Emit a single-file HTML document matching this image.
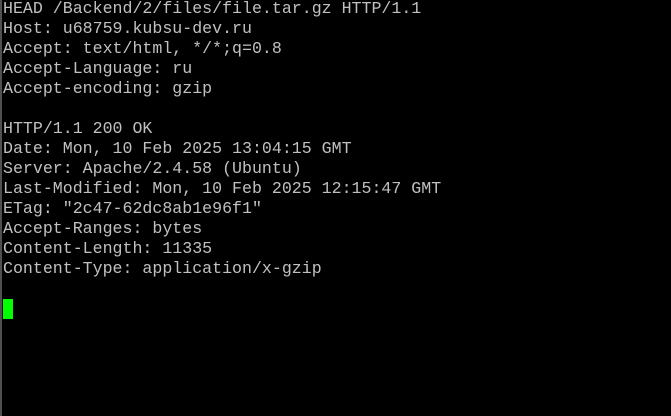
<!DOCTYPE html>
<html><head><style>
html,body{margin:0;padding:0;background:#000;width:671px;height:416px;overflow:hidden}
.b{position:absolute;left:0;top:0;width:2px;height:416px;background:#505050}
pre{position:absolute;left:3px;top:-1px;margin:0;font-family:"Liberation Mono",monospace;font-size:16.6px;line-height:20px;color:#c0c0c0}
.c{position:absolute;left:3px;top:299px;width:10px;height:20px;background:#00ff00}
</style></head><body>
<div class="b"></div>
<pre>HEAD /Backend/2/files/file.tar.gz HTTP/1.1
Host: u68759.kubsu-dev.ru
Accept: text/html, */*;q=0.8
Accept-Language: ru
Accept-encoding: gzip

HTTP/1.1 200 OK
Date: Mon, 10 Feb 2025 13:04:15 GMT
Server: Apache/2.4.58 (Ubuntu)
Last-Modified: Mon, 10 Feb 2025 12:15:47 GMT
ETag: "2c47-62dc8ab1e96f1"
Accept-Ranges: bytes
Content-Length: 11335
Content-Type: application/x-gzip
</pre>
<div class="c"></div>
</body></html>
